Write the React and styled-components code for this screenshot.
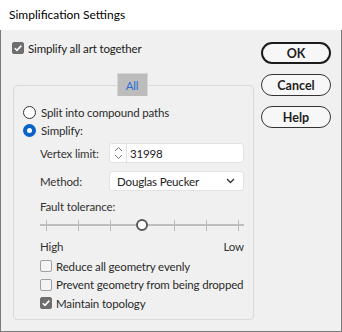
import React, { useState } from "react";
import styled, { createGlobalStyle } from "styled-components";

const GlobalStyle = createGlobalStyle`
  html, body {
    margin: 0;
    padding: 0;
    background: #f0f0f0;
  }
  body {
    font-family: Lato, "Noto Sans", sans-serif;
    font-size: 11.5px;
    letter-spacing: -0.15px;
    color: #1a1a1a;
    white-space: nowrap;
  }
`;

function Check(props) {
  const { checked, label, onToggle } = props;
  return (
    <CheckRow onClick={onToggle}>
      <CheckBox checked={checked}>
        {checked && (
          <svg width="10" height="10" viewBox="0 0 10 10">
            <path d="M1.8 5.2 L4 7.4 L8.3 2.6" stroke="#fff" strokeWidth="1.6" fill="none" />
          </svg>
        )}
      </CheckBox>
      <span>{label}</span>
    </CheckRow>
  );
}

function Radio(props) {
  const { selected, label, onSelect } = props;
  return (
    <RadioRow onClick={onSelect}>
      <RadioDot selected={selected} />
      <span>{label}</span>
    </RadioRow>
  );
}

export default function App() {
  const [together, setTogether] = useState(true);
  const [mode, setMode] = useState("simplify");
  const [reduce, setReduce] = useState(false);
  const [prevent, setPrevent] = useState(false);
  const [topology, setTopology] = useState(true);
  const ticks = [0, 1, 2, 3, 4, 5, 6];
  const tolerance = 50;

  return (
    <>
      <GlobalStyle />
      <Window>
        <TitleBar>Simplification Settings</TitleBar>
        <Body>
          <LeftCol>
            <TopCheck>
              <Check checked={together} label="Simplify all art together" onToggle={() => setTogether(!together)} />
            </TopCheck>
            <Tab>All</Tab>
            <Group>
              <Radio label="Split into compound paths" selected={mode === "split"} onSelect={() => setMode("split")} />
              <Radio label="Simplify:" selected={mode === "simplify"} onSelect={() => setMode("simplify")} />
              <Indent>
                <FieldRow>
                  <FieldLabel>Vertex limit:</FieldLabel>
                  <Field>
                    <Spinner>
                      <svg width="9" height="16" viewBox="0 0 9 16">
                        <path d="M1 6 L4.5 2.5 L8 6" stroke="#777" strokeWidth="1" fill="none" />
                        <path d="M1 10 L4.5 13.5 L8 10" stroke="#777" strokeWidth="1" fill="none" />
                      </svg>
                    </Spinner>
                    <FieldText>31998</FieldText>
                  </Field>
                </FieldRow>
                <FieldRow gap={8}>
                  <FieldLabel>Method:</FieldLabel>
                  <Select>
                    <span>Douglas Peucker</span>
                    <svg width="9" height="6" viewBox="0 0 9 6">
                      <path d="M1 1 L4.5 4.5 L8 1" stroke="#333" strokeWidth="1.3" fill="none" />
                    </svg>
                  </Select>
                </FieldRow>
                <SubLabel>Fault tolerance:</SubLabel>
                <Slider>
                  <Track />
                  <Ticks>
                    {ticks.map((t) => (
                      <Tick key={t} />
                    ))}
                  </Ticks>
                  <Thumb style={{ left: `calc(6px + (100% - 12px) * ${tolerance / 100} - 6px)` }} />
                </Slider>
                <Ends>
                  <span>High</span>
                  <span>Low</span>
                </Ends>
                <Options>
                  <Check checked={reduce} label="Reduce all geometry evenly" onToggle={() => setReduce(!reduce)} />
                  <Check checked={prevent} label="Prevent geometry from being dropped" onToggle={() => setPrevent(!prevent)} />
                  <Check checked={topology} label="Maintain topology" onToggle={() => setTopology(!topology)} />
                </Options>
              </Indent>
            </Group>
          </LeftCol>
          <Buttons>
            <Button primary>OK</Button>
            <Button>Cancel</Button>
            <Button>Help</Button>
          </Buttons>
        </Body>
      </Window>
    </>
  );
}

const Window = styled.div`
  width: 342px;
  height: 332px;
  display: flex;
  flex-direction: column;
  box-sizing: border-box;
`;

const TitleBar = styled.div`
  height: 30px;
  flex-shrink: 0;
  background: #ffffff;
  display: flex;
  align-items: center;
  padding-left: 9px;
  padding-bottom: 1px;
  box-sizing: border-box;
  font-size: 12px;
  letter-spacing: 0;
  color: #000;
`;

const Body = styled.div`
  flex: 1;
  display: flex;
  background: #f0f0f0;
  border: 1px solid #7a7a7a;
  border-top: none;
  padding: 12px 0 0 12px;
`;

const LeftCol = styled.div`
  width: 241px;
  display: flex;
  flex-direction: column;
`;

const TopCheck = styled.div`
  height: 12px;
  display: flex;
  align-items: center;
  margin-left: -1px;
  margin-bottom: 19px;
`;

const Tab = styled.div`
  position: relative;
  z-index: 1;
  align-self: center;
  width: 31px;
  height: 23px;
  box-sizing: border-box;
  background: #bcbcbc;
  border: 1px solid #d6d6d6;
  border-bottom: none;
  color: #2a6fd6;
  display: flex;
  align-items: center;
  justify-content: center;
  margin-left: -3px;
  margin-bottom: -11px;
`;

const Group = styled.div`
  height: 235px;
  box-sizing: border-box;
  border: 1px solid #dadada;
  border-radius: 4px;
  padding: 17px 0 0 9px;
  display: flex;
  flex-direction: column;
  color: #2b2b2b;
`;

const RadioRow = styled.div`
  height: 18px;
  display: flex;
  align-items: center;
  gap: 5px;
  cursor: default;
`;

const RadioDot = styled.div`
  flex-shrink: 0;
  width: 13px;
  height: 13px;
  box-sizing: border-box;
  border-radius: 50%;
  border: ${(p) => (p.selected ? "none" : "1px solid #333")};
  background: ${(p) => (p.selected ? "#0a62c9" : "#fff")};
  display: flex;
  align-items: center;
  justify-content: center;
  &::after {
    content: "";
    display: ${(p) => (p.selected ? "block" : "none")};
    width: 5px;
    height: 5px;
    border-radius: 50%;
    background: #fff;
  }
`;

const Indent = styled.div`
  padding-left: 17px;
  width: 204px;
  display: flex;
  flex-direction: column;
`;

const FieldRow = styled.div`
  height: 20px;
  margin-top: ${(p) => p.gap || 4}px;
  display: flex;
  align-items: center;
  justify-content: space-between;
`;

const FieldLabel = styled.span`
  color: #333;
`;

const Field = styled.div`
  width: 135px;
  height: 20px;
  box-sizing: border-box;
  background: #fff;
  border: 1px solid #e2e2e2;
  border-radius: 3px;
  display: flex;
  align-items: center;
`;

const Spinner = styled.div`
  width: 16px;
  height: 100%;
  border-right: 1px solid #e2e2e2;
  display: flex;
  align-items: center;
  justify-content: center;
`;

const FieldText = styled.span`
  padding-left: 3px;
  color: #222;
`;

const Select = styled.div`
  width: 135px;
  height: 20px;
  box-sizing: border-box;
  background: #fff;
  border: 1px solid #e2e2e2;
  border-radius: 3px;
  display: flex;
  align-items: center;
  justify-content: space-between;
  padding: 0 8px 0 7px;
  color: #222;
`;

const SubLabel = styled.div`
  height: 14px;
  margin-top: 8px;
  display: flex;
  align-items: center;
  color: #333;
`;

const Slider = styled.div`
  position: relative;
  height: 20px;
  margin-top: 2px;
`;

const Track = styled.div`
  position: absolute;
  left: 0;
  right: 0;
  top: 9px;
  height: 2px;
  background: #bdbdbd;
`;

const Ticks = styled.div`
  height: 100%;
  padding: 0 5px 0 6px;
  display: flex;
  justify-content: space-between;
  align-items: center;
`;

const Tick = styled.div`
  width: 1px;
  height: 11px;
  background: #b9b9b9;
`;

const Thumb = styled.div`
  position: absolute;
  top: 4px;
  width: 12px;
  height: 12px;
  box-sizing: border-box;
  border-radius: 50%;
  border: 2px solid #5a5a5a;
  background: #fff;
`;

const Ends = styled.div`
  height: 14px;
  margin-top: 5px;
  display: flex;
  justify-content: space-between;
  color: #333;
  line-height: 14px;
`;

const Options = styled.div`
  margin-top: 3px;
  display: flex;
  flex-direction: column;
`;

const CheckRow = styled.div`
  height: 18.5px;
  display: flex;
  align-items: center;
  gap: 4px;
  cursor: default;
`;

const CheckBox = styled.div`
  flex-shrink: 0;
  width: 12px;
  height: 12px;
  box-sizing: border-box;
  border-radius: 2px;
  border: 1px solid ${(p) => (p.checked ? "#6e6e6e" : "#a0a0a0")};
  background: ${(p) => (p.checked ? "#6e6e6e" : "#f4f4f4")};
  display: flex;
  align-items: center;
  justify-content: center;
`;

const Buttons = styled.div`
  margin-left: 7px;
  display: flex;
  flex-direction: column;
  gap: 10px;
`;

const Button = styled.button`
  width: 70px;
  height: 22px;
  box-sizing: border-box;
  border-radius: 11px;
  border: ${(p) => (p.primary ? "2px solid #1c1c1c" : "1px solid #333")};
  background: #f7f7f7;
  font-family: Lato, "Noto Sans", sans-serif;
  font-size: 12.5px;
  font-weight: bold;
  color: #1e1e1e;
  padding: 0;
  display: flex;
  align-items: center;
  justify-content: center;
`;
